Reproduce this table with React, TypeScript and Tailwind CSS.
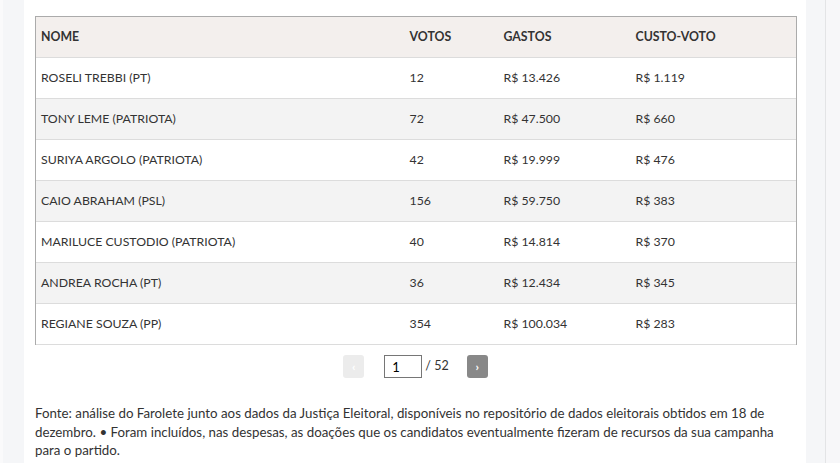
const rows = [
  { nome: "ROSELI TREBBI (PT)", votos: "12", gastos: "R$ 13.426", custo: "R$ 1.119" },
  { nome: "TONY LEME (PATRIOTA)", votos: "72", gastos: "R$ 47.500", custo: "R$ 660" },
  { nome: "SURIYA ARGOLO (PATRIOTA)", votos: "42", gastos: "R$ 19.999", custo: "R$ 476" },
  { nome: "CAIO ABRAHAM (PSL)", votos: "156", gastos: "R$ 59.750", custo: "R$ 383" },
  { nome: "MARILUCE CUSTODIO (PATRIOTA)", votos: "40", gastos: "R$ 14.814", custo: "R$ 370" },
  { nome: "ANDREA ROCHA (PT)", votos: "36", gastos: "R$ 12.434", custo: "R$ 345" },
  { nome: "REGIANE SOUZA (PP)", votos: "354", gastos: "R$ 100.034", custo: "R$ 283" },
];

export default function App() {
  return (
    <div
      className="flex h-[463px] w-[840px] overflow-hidden bg-[#f5f6f8] text-[#333]"
      style={{ fontFamily: "Lato, 'Open Sans', sans-serif" }}
    >
      <div className="w-[24px] shrink-0 border-l-[3px] border-[#fafafb]" />
      <div className="w-[782px] shrink-0 bg-white px-[11px] pt-[16px]">
        <table className="w-[761px] table-fixed border-collapse text-[12.3px]">
          <colgroup>
            <col className="w-[369px]" />
            <col className="w-[94px]" />
            <col className="w-[132px]" />
            <col className="w-[166px]" />
          </colgroup>
          <thead>
            <tr className="h-[41px] bg-[#f3efed] text-left">
              <th className="border-t border-l border-[#ababab] pl-[5px] font-bold">NOME</th>
              <th className="border-t border-[#ababab] pl-[5px] font-bold">VOTOS</th>
              <th className="border-t border-[#ababab] pl-[5px] font-bold">GASTOS</th>
              <th className="border-t border-r border-[#ababab] pl-[5px] font-bold">CUSTO-VOTO</th>
            </tr>
          </thead>
          <tbody>
            {rows.map((r, i) => (
              <tr
                key={r.nome}
                className={`h-[41px] border-t border-[#dcdcdc] ${i % 2 === 1 ? "bg-[#f3f3f3]" : "bg-white"}`}
              >
                <td className="border-l border-[#ababab] pl-[5px]">{r.nome}</td>
                <td className="pl-[5px]">{r.votos}</td>
                <td className="pl-[5px]">{r.gastos}</td>
                <td className="border-r border-[#ababab] pl-[5px]">{r.custo}</td>
              </tr>
            ))}
            <tr className="border-t border-[#dcdcdc]">
              <td colSpan={4} />
            </tr>
          </tbody>
        </table>

        <div className="mt-[10px] flex items-center justify-center pl-[1px]">
          <button className="flex h-[23px] w-[21px] items-center justify-center rounded-[3px] bg-[#ececec] text-[12px] font-bold text-white">
            ‹
          </button>
          <input
            defaultValue="1"
            className="ml-[20px] h-[23px] w-[38px] border border-[#767676] px-[7px] text-[13px] text-black outline-none"
          />
          <span className="ml-[3px] text-[12.5px] text-[#333]">/ 52</span>
          <button className="ml-[18px] flex h-[23px] w-[21px] items-center justify-center rounded-[3px] bg-[#888888] text-[12px] font-bold text-white">
            ›
          </button>
        </div>

        <p className="mt-[26px] w-[760px] text-[13.3px] leading-[18.5px] text-[#333]">
          Fonte: análise do Farolete junto aos dados da Justiça Eleitoral, disponíveis no repositório de dados eleitorais obtidos em 18 de dezembro. • Foram incluídos, nas despesas, as doações que os candidatos eventualmente fizeram de recursos da sua campanha para o partido.
        </p>
      </div>
      <div className="w-[19px] shrink-0" />
      <div className="flex-1 border-l border-[#e3e4e6] bg-[#f7f7f9]" />
    </div>
  );
}
